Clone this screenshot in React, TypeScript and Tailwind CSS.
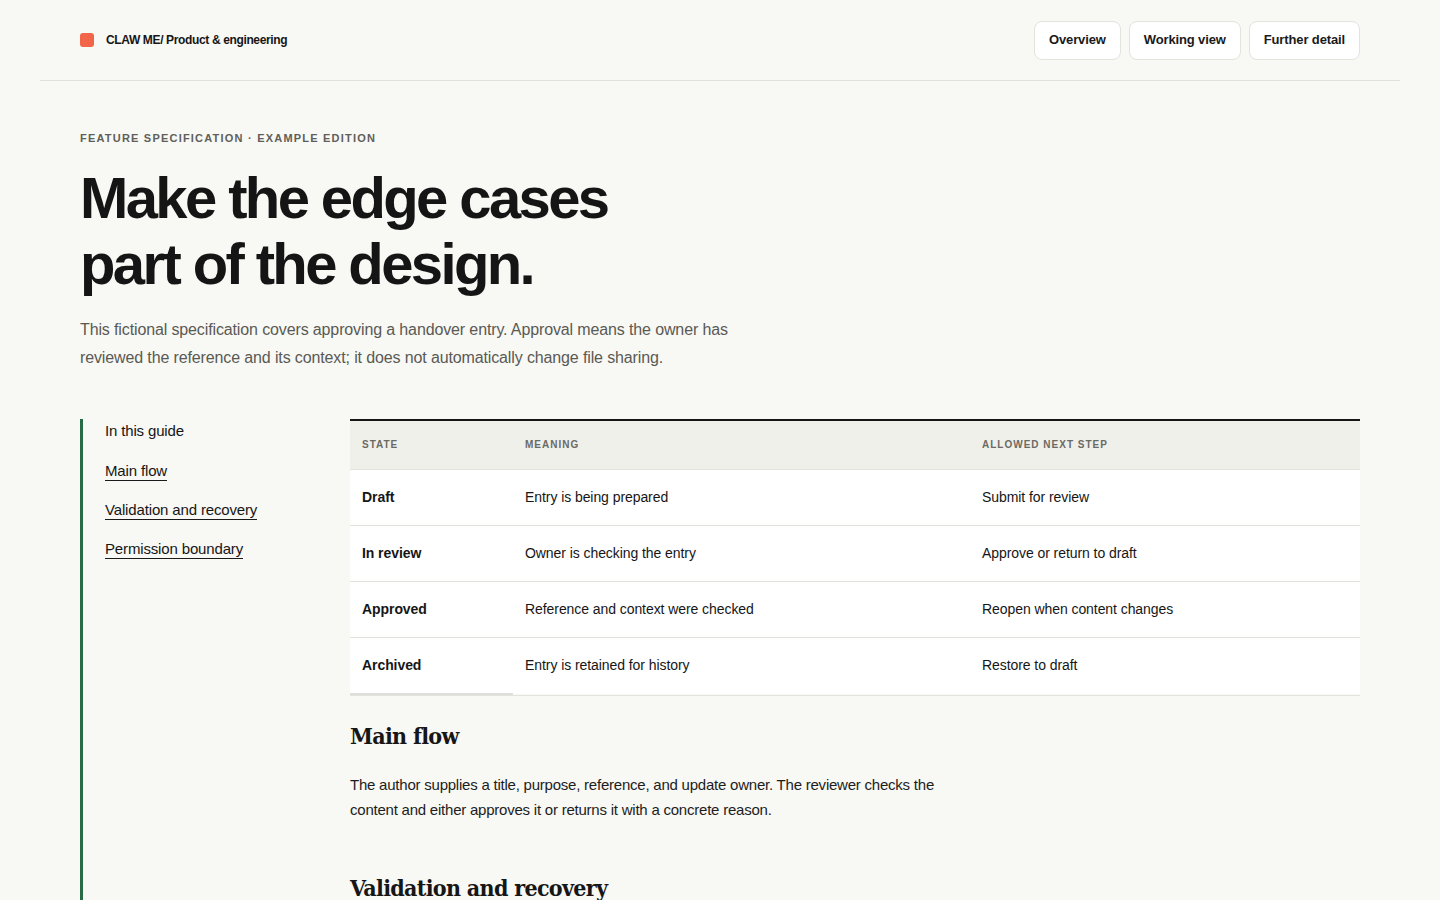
import React from "react";

const rows = [
  { s: "Draft", m: "Entry is being prepared", n: "Submit for review" },
  { s: "In review", m: "Owner is checking the entry", n: "Approve or return to draft" },
  { s: "Approved", m: "Reference and context were checked", n: "Reopen when content changes" },
  { s: "Archived", m: "Entry is retained for history", n: "Restore to draft" },
];

export default function App() {
  return (
    <div className="min-h-screen bg-[#f8f8f4] text-[#161616] font-['Liberation_Sans',Arial,sans-serif]">
      <header className="mx-10 flex h-[81px] items-center justify-between border-b border-[#e2e2dc] px-10">
        <div className="flex items-center gap-3">
          <span className="block h-[14px] w-[14px] rounded-[3px] bg-[#f26549]"></span>
          <span className="text-[12px] font-bold tracking-[-0.03em]">CLAW ME/ Product &amp; engineering</span>
        </div>
        <nav className="flex items-center gap-2">
          {["Overview", "Working view", "Further detail"].map((t) => (
            <button
              key={t}
              className="h-[39px] rounded-lg border border-[#e3e3dd] bg-white px-[14px] text-[13px] font-bold tracking-[-0.01em] text-[#1a1a1a]"
            >
              {t}
            </button>
          ))}
        </nav>
      </header>

      <main className="px-20">
        <section className="pt-[49px]">
          <p className="text-[11px] font-bold uppercase tracking-[0.11em] text-[#5f5f5a]">
            Feature specification · Example edition
          </p>
          <h1 className="mt-[18px] text-[58px] font-bold leading-[66px] tracking-[-0.045em] text-[#151515]">
            Make the edge cases
            <br />
            part of the design.
          </h1>
          <p className="mt-[19px] max-w-[680px] text-[16px] leading-[28px] tracking-[-0.008em] text-[#5a5a55]">
            This fictional specification covers approving a handover entry. Approval means the owner has reviewed the
            reference and its context; it does not automatically change file sharing.
          </p>
        </section>

        <div className="mt-[47px] flex gap-0">
          <aside className="w-[270px] shrink-0 self-stretch border-l-[3px] border-[#2a6b47] pl-[22px] min-h-[481px]">
            <p className="pt-[3px] text-[15px] leading-[18px] tracking-[-0.01em]">In this guide</p>
            <ul className="mt-[22px] flex flex-col gap-[21px] text-[15px] leading-[18px] tracking-[-0.01em]">
              {["Main flow", "Validation and recovery", "Permission boundary"].map((l) => (
                <li key={l}>
                  <a className="border-b border-[#1a1a1a] pb-[1px]">{l}</a>
                </li>
              ))}
            </ul>
          </aside>

          <div className="flex-1">
            <table className="w-full border-collapse border-t-2 border-[#161616] text-left">
              <thead>
                <tr className="h-[50px] bg-[#f0f0eb]">
                  <th className="w-[163px] pl-3 text-[10px] font-bold uppercase tracking-[0.1em] text-[#6a6a65]">State</th>
                  <th className="w-[457px] pl-3 text-[10px] font-bold uppercase tracking-[0.1em] text-[#6a6a65]">Meaning</th>
                  <th className="pl-3 text-[10px] font-bold uppercase tracking-[0.1em] text-[#6a6a65]">Allowed next step</th>
                </tr>
              </thead>
              <tbody>
                {rows.map((r, i) => (
                  <tr key={r.s} className="h-[56px] border-t border-[#e3e3de] bg-white text-[14px] tracking-[-0.005em]">
                    <td className={"pl-3 font-bold " + (i === rows.length - 1 ? "border-b-2 border-[#dededa]" : "")}>{r.s}</td>
                    <td className="pl-3">{r.m}</td>
                    <td className="pl-3">{r.n}</td>
                  </tr>
                ))}
              </tbody>
            </table>
            <div className="border-t border-[#e3e3de]"></div>

            <h2 className="mt-[24px] font-['DejaVu_Serif',serif] font-stretch-condensed text-[23px] font-bold leading-[32px] tracking-[-0.03em]">
              Main flow
            </h2>
            <p className="mt-[20px] max-w-[600px] text-[15px] leading-[25px] tracking-[-0.015em] text-[#1d1d1d]">
              The author supplies a title, purpose, reference, and update owner. The reviewer checks the content and
              either approves it or returns it with a concrete reason.
            </p>
            <h2 className="mt-[50px] font-['DejaVu_Serif',serif] font-stretch-condensed text-[23px] font-bold leading-[32px] tracking-[-0.03em]">
              Validation and recovery
            </h2>
            <p className="mt-[20px] max-w-[600px] text-[15px] leading-[25px] tracking-[-0.015em] text-[#1d1d1d]">
              Missing fields are flagged inline before submission. A returned entry keeps its history so the author can
              fix the issue without starting over.
            </p>
          </div>
        </div>
      </main>
    </div>
  );
}
